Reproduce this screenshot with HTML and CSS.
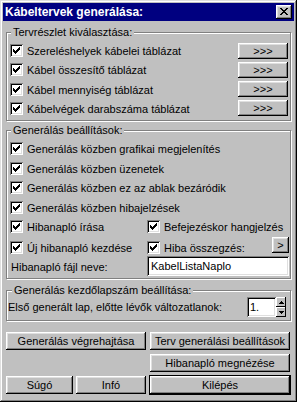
FILE: index.html
```html
<!DOCTYPE html>
<html lang="hu">
<head>
  <meta charset="UTF-8">
  <title>Kábeltervek generálása</title>
  <link rel="stylesheet" href="styles.css">
</head>
<body>
  <svg class="defs" width="0" height="0">
    <defs>
      <symbol id="tick" viewBox="0 0 7 7">
        <path d="M0 2V5H1V6H2V7H3V6H4V5H5V4H6V3H7V0H6V1H5V2H4V3H3V4H2V3H1V2Z"/>
      </symbol>
    </defs>
  </svg>

  <div class="window">
    <div class="titlebar">
      <span class="title">Kábeltervek generálása:</span>
      <button class="close">
        <svg width="8" height="7" viewBox="0 0 8 7"><path d="M0 0h2v1H0z M6 0h2v1H6z M1 1h2v1H1z M5 1h2v1H5z M2 2h4v1H2z M3 3h2v1H3z M2 4h4v1H2z M1 5h2v1H1z M5 5h2v1H5z M0 6h2v1H0z M6 6h2v1H6z"/></svg>
      </button>
    </div>

    <div class="content">
      <fieldset class="group parts">
        <legend>Tervrészlet kiválasztása:</legend>
        <div class="row">
          <label class="check"><span class="box"><svg><use href="#tick"/></svg></span><span class="text">Szereléshelyek kábelei táblázat</span></label>
          <button class="btn more">&gt;&gt;&gt;</button>
        </div>
        <div class="row">
          <label class="check"><span class="box"><svg><use href="#tick"/></svg></span><span class="text">Kábel összesítő táblázat</span></label>
          <button class="btn more">&gt;&gt;&gt;</button>
        </div>
        <div class="row">
          <label class="check"><span class="box"><svg><use href="#tick"/></svg></span><span class="text">Kábel mennyiség táblázat</span></label>
          <button class="btn more">&gt;&gt;&gt;</button>
        </div>
        <div class="row">
          <label class="check"><span class="box"><svg><use href="#tick"/></svg></span><span class="text">Kábelvégek darabszáma táblázat</span></label>
          <button class="btn more">&gt;&gt;&gt;</button>
        </div>
      </fieldset>

      <fieldset class="group settings">
        <legend>Generálás beállítások:</legend>
        <div class="row">
          <label class="check"><span class="box"><svg><use href="#tick"/></svg></span><span class="text">Generálás közben grafikai megjelenítés</span></label>
        </div>
        <div class="row">
          <label class="check"><span class="box"><svg><use href="#tick"/></svg></span><span class="text">Generálás közben üzenetek</span></label>
        </div>
        <div class="row">
          <label class="check"><span class="box"><svg><use href="#tick"/></svg></span><span class="text">Generálás közben ez az ablak bezáródik</span></label>
        </div>
        <div class="row">
          <label class="check"><span class="box"><svg><use href="#tick"/></svg></span><span class="text">Generálás közben hibajelzések</span></label>
        </div>
        <div class="row split">
          <label class="check"><span class="box"><svg><use href="#tick"/></svg></span><span class="text">Hibanapló írása</span></label>
          <label class="check"><span class="box"><svg><use href="#tick"/></svg></span><span class="text">Befejezéskor hangjelzés</span></label>
        </div>
        <div class="row split">
          <label class="check"><span class="box"><svg><use href="#tick"/></svg></span><span class="text">Új hibanapló kezdése</span></label>
          <div class="summary">
            <label class="check"><span class="box"><svg><use href="#tick"/></svg></span><span class="text">Hiba összegzés:</span></label>
            <button class="btn small">&gt;</button>
          </div>
        </div>
        <div class="row split file">
          <span class="text">Hibanapló fájl neve:</span>
          <div class="field">KabelListaNaplo</div>
        </div>
      </fieldset>

      <fieldset class="group start">
        <legend>Generálás kezdőlapszám beállítása:</legend>
        <div class="row">
          <span class="text">Első generált lap, előtte lévők változatlanok:</span>
          <div class="spinner">
            <div class="field num">1.</div>
            <div class="spin">
              <span class="spin-btn"><svg width="5" height="3" viewBox="0 0 5 3"><path d="M2 0h1v1h1v1h1v1H0V2h1V1h1z"/></svg></span>
              <span class="spin-btn"><svg width="5" height="3" viewBox="0 0 5 3"><path d="M0 0h5v1H4v1H3v1H2V2H1V1H0z"/></svg></span>
            </div>
          </div>
        </div>
      </fieldset>

      <div class="actions">
        <button class="btn">Generálás végrehajtása</button>
        <button class="btn">Terv generálási beállítások</button>
        <span></span>
        <button class="btn">Hibanapló megnézése</button>
        <div class="pair">
          <button class="btn help">Súgó</button>
          <button class="btn info">Infó</button>
        </div>
        <button class="btn default">Kilépés</button>
      </div>
    </div>
  </div>
</body>
</html>
```

FILE: styles.css
```css
* {
  box-sizing: border-box;
}
body {
  margin: 0;
  font-family: "Liberation Sans", Arial, sans-serif;
  font-size: 11px;
  color: #000;
  background: #c0c0c0;
}
.defs {
  position: absolute;
}
.window {
  width: 297px;
  height: 402px;
  padding: 3px;
  background: #c0c0c0;
  box-shadow: inset -1px -1px #000, inset 1px 1px #dfdfdf, inset -2px -2px #808080, inset 2px 2px #fff;
}
.titlebar {
  height: 18px;
  display: flex;
  align-items: center;
  justify-content: space-between;
  padding-left: 2px;
  background: #000080;
  color: #fff;
}
.title {
  font-weight: bold;
  font-size: 12px;
  line-height: 18px;
}
.close {
  width: 16px;
  height: 14px;
  margin-right: 2px;
  padding: 0 1px 1px 0;
  border: 0;
  display: flex;
  align-items: center;
  justify-content: center;
  background: #c0c0c0;
  box-shadow: inset -1px -1px #000, inset 1px 1px #fff, inset -2px -2px #808080, inset 2px 2px #dfdfdf;
}
.close svg {
  display: block;
}
.content {
  padding: 0 3px;
}

/* group boxes */
.group {
  margin: 0;
  padding: 2px 0;
  min-width: 0;
  border: 1px solid #808080;
  box-shadow: inset 1px 1px #fff, 1px 1px #fff;
}
.group legend {
  margin-left: 4px;
  padding: 0 2px;
  line-height: 13px;
  background: #c0c0c0;
}
.parts {
  margin-top: 5px;
}
.settings {
  margin-top: 3px;
  padding-bottom: 1px;
}
.start {
  margin-top: 5px;
  padding: 0 4px 3px 1px;
}
.row {
  display: flex;
  align-items: center;
  justify-content: space-between;
}
.parts .row {
  height: 19.25px;
  padding: 0 2px 0 3px;
}
.settings .row {
  height: 19.5px;
  padding: 0 1px 0 3px;
}
.split {
  display: grid;
  grid-template-columns: 137px 1fr;
}
.settings .file {
  height: 21px;
  align-items: start;
}
.file .text {
  padding: 5px 0 0 1px;
}
.start .row {
  height: 20px;
}

/* checkboxes */
.check {
  display: flex;
  align-items: center;
  gap: 4px;
  white-space: nowrap;
}
.check .text {
  margin-top: 2px;
}
.text {
  line-height: 13px;
  white-space: nowrap;
}
.box {
  width: 13px;
  height: 13px;
  padding: 3px;
  flex: none;
  background: #fff;
  box-shadow: inset 1px 1px #808080, inset -1px -1px #fff, inset 2px 2px #000, inset -2px -2px #dfdfdf;
}
.box svg {
  display: block;
  width: 7px;
  height: 7px;
}
.summary {
  display: flex;
  align-items: center;
  justify-content: space-between;
}

/* buttons */
.btn {
  padding: 0;
  border: 0;
  font: inherit;
  color: #000;
  background: #c0c0c0;
  box-shadow: inset -1px -1px #000, inset 1px 1px #fff, inset -2px -2px #808080, inset 2px 2px #dfdfdf;
}
.more {
  width: 50px;
  height: 16px;
}
.small {
  width: 17px;
  height: 16px;
  margin-bottom: 6px;
}
.default {
  box-shadow: 0 0 0 1px #000, inset -1px -1px #000, inset 1px 1px #fff, inset -2px -2px #808080, inset 2px 2px #dfdfdf;
}

/* text fields */
.field {
  height: 20px;
  padding: 4px 4px 0;
  line-height: 13px;
  background: #fff;
  box-shadow: inset 1px 1px #808080, inset -1px -1px #fff, inset 2px 2px #000, inset -2px -2px #dfdfdf;
}
.spinner {
  display: flex;
}
.num {
  width: 29px;
  padding-left: 3px;
}
.spin {
  width: 10px;
  height: 20px;
  display: flex;
  flex-direction: column;
}
.spin-btn {
  flex: 1;
  display: flex;
  align-items: center;
  justify-content: center;
  background: #c0c0c0;
  box-shadow: inset -1px -1px #000, inset 1px 1px #fff;
}
.spin-btn svg {
  display: block;
}

/* bottom buttons */
.actions {
  margin-top: 11px;
  display: grid;
  grid-template-columns: 140px 140px;
  grid-auto-rows: 18px;
  gap: 4px;
}
.pair {
  display: flex;
  gap: 3px;
}
.help {
  width: 67px;
}
.info {
  flex: 1;
}
```
